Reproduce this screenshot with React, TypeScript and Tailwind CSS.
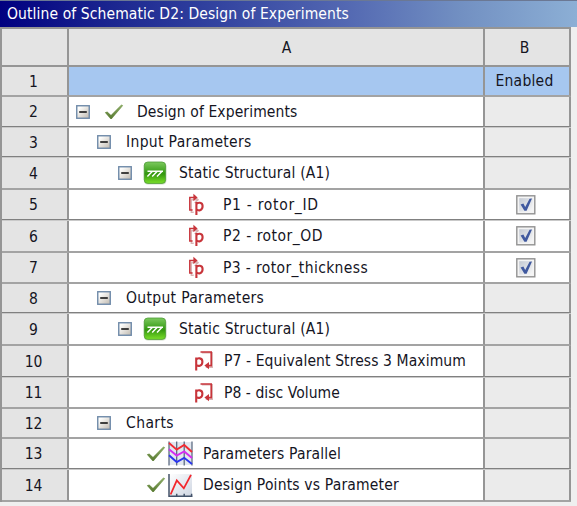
import React from "react";

const Check = () => (
  <svg width="20" height="16" viewBox="0 0 20 16" className="shrink-0">
    <defs>
      <linearGradient id="ck" x1="0" y1="0" x2="0" y2="1">
        <stop offset="0" stopColor="#8fae6b" />
        <stop offset="1" stopColor="#57792f" />
      </linearGradient>
    </defs>
    <path d="M0.8 8.6 L3.2 7.4 L7 11 L17.4 0.6 L19.2 1.6 L7.6 15 H6.6 Z" fill="url(#ck)" />
  </svg>
);

const Toggle = () => (
  <svg width="14" height="14" viewBox="0 0 14 14" className="shrink-0">
    <defs>
      <linearGradient id="tg" x1="0" y1="0" x2="1" y2="1">
        <stop offset="0.2" stopColor="#fdfdfb" />
        <stop offset="1" stopColor="#bfb8ae" />
      </linearGradient>
    </defs>
    <rect x="0.75" y="0.75" width="12.5" height="12.5" fill="url(#tg)" stroke="#6f8aa9" strokeWidth="1.4" />
    <path d="M3.2 7H10.8" stroke="#161616" strokeWidth="1.6" />
  </svg>
);

const Structural = () => (
  <svg width="24" height="24" viewBox="0 0 24 24" className="shrink-0">
    <defs>
      <linearGradient id="gr" x1="0" y1="0" x2="0" y2="1">
        <stop offset="0" stopColor="#7cc95e" />
        <stop offset="0.42" stopColor="#43a422" />
        <stop offset="0.55" stopColor="#33960f" />
        <stop offset="1" stopColor="#7be02a" />
      </linearGradient>
    </defs>
    <rect x="1" y="1.4" width="22.4" height="22.2" rx="4" fill="#b9c9b0" opacity="0.7" />
    <rect x="1.2" y="1" width="21.4" height="21.4" rx="3.6" fill="url(#gr)" stroke="#4d9c35" strokeWidth="0.8" />
    <path d="M4.5 10.2H20M9.2 10.5L4.4 15.4M14 10.5L9.2 15.4M18.8 10.5L14 15.4" stroke="#fff" strokeWidth="1.5" fill="none" />
  </svg>
);

const InputParam = () => (
  <svg width="18" height="24" viewBox="0 0 18 24" className="shrink-0">
    <path d="M5 18.5H2.6V6H8.4M6 2.8L9.4 6L6 9.2" stroke="#d9b4b4" strokeWidth="1.4" fill="none" transform="translate(.7 .7)" />
    <path d="M4.6 17H1.8V4.4H7.8" stroke="#c8353b" strokeWidth="1.5" fill="none" />
    <path d="M5.4 0.8L9.6 4.4L5.4 8Z" fill="#c8353b" />
    <path d="M8.4 9V22M8.4 11.2C9.6 9.1 14.6 8.8 14.6 13.1C14.6 18 10 18.2 8.4 16" stroke="#c8353b" strokeWidth="2.1" fill="none" />
  </svg>
);

const OutputParam = () => (
  <svg width="20" height="22" viewBox="0 0 20 22" className="shrink-0">
    <path d="M7 2H17.5V16.4H11" stroke="#d9b4b4" strokeWidth="1.4" fill="none" transform="translate(.8 .8)" />
    <path d="M6.5 2H17.2V15.6H13.4" stroke="#c8353b" strokeWidth="1.6" fill="none" />
    <path d="M15 12L10.4 15.6L15 19.2Z" fill="#c8353b" />
    <path d="M2.2 7.6V20.6M2.2 9.8C3.4 7.7 8.4 7.4 8.4 11.7C8.4 16.4 3.8 16.6 2.2 14.6" stroke="#c8353b" strokeWidth="2.1" fill="none" />
  </svg>
);

const ParallelChart = () => (
  <svg width="25" height="25" viewBox="0 0 25 25" className="shrink-0">
    <rect x="1" y="1" width="23" height="23" fill="#e2e7ef" />
    <path d="M1 0.5V24.5M8.7 0.5V24.5M16.2 0.5V24.5M24 0.5V24.5" stroke="#53627a" strokeWidth="1.2" />
    <g fill="none" strokeWidth="1.9">
      <path d="M1 2L8.7 8.6L16.2 4L24 11" stroke="#f22b32" />
      <path d="M1 8.2L8.7 14.6L16.2 10.5L24 17" stroke="#d52df0" />
      <path d="M1 14.2L8.7 21L16.2 16.8L24 23" stroke="#2a35ee" />
    </g>
  </svg>
);

const LineChart = () => (
  <svg width="25" height="25" viewBox="0 0 25 25" className="shrink-0">
    <defs>
      <linearGradient id="lc" x1="0" y1="0" x2="1" y2="1">
        <stop offset="0" stopColor="#ffffff" />
        <stop offset="1" stopColor="#cfd6e2" />
      </linearGradient>
    </defs>
    <rect x="1" y="1" width="23" height="22" fill="url(#lc)" />
    <path d="M1 1V23.2H24.5M8.7 20.8V23M16.2 20.8V23M23.6 20.8V23" stroke="#44536a" strokeWidth="1.5" fill="none" />
    <path d="M2.6 21.5L8.8 7.5L15.8 15.3L23 1.8" stroke="#f3262c" strokeWidth="1.8" fill="none" />
  </svg>
);

const CheckBox = () => (
  <svg width="20" height="20" viewBox="0 0 20 20" className="mr-[2px]">
    <defs>
      <linearGradient id="cb" x1="0" y1="0" x2="1" y2="1">
        <stop offset="0" stopColor="#c3c9d3" />
        <stop offset="1" stopColor="#f8f8f8" />
      </linearGradient>
    </defs>
    <rect x="0.8" y="0.8" width="18" height="18" fill="#f4f4f4" stroke="#929292" strokeWidth="1.4" />
    <rect x="3.2" y="3.2" width="13.4" height="13.4" fill="url(#cb)" />
    <path d="M4.6 9.6L7.4 8.4L9.2 12L13.6 3.8L16 3.6L10.6 15.8H8.4Z" fill="#40599f" />
  </svg>
);

type Row = {
  h: string;
  sharp?: boolean;
  pad?: string;
  icons?: React.ReactNode;
  text?: string;
  track?: string;
  checked?: boolean;
};

const rows: Row[] = [
  { h: "h-[30px]" },
  { h: "h-[31px]", sharp: true, pad: "pl-[7px]", icons: <><Toggle /><span className="w-[14px]" /><Check /><span className="w-[13px]" /></>, text: "Design of Experiments", track: "tracking-[0.1px]" },
  { h: "h-[30px]", sharp: true, pad: "pl-[28px]", icons: <><Toggle /><span className="w-[15px]" /></>, text: "Input Parameters", track: "tracking-[0.34px]" },
  { h: "h-[32px]", pad: "pl-[49px]", icons: <><Toggle /><span className="w-[11px]" /><Structural /><span className="w-[12px]" /></>, text: "Static Structural (A1)", track: "tracking-[0.19px]" },
  { h: "h-[31px]", sharp: true, pad: "pl-[119px]", icons: <><InputParam /><span className="w-[17px]" /></>, text: "P1 - rotor_ID", track: "tracking-[0.7px]", checked: true },
  { h: "h-[32px]", pad: "pl-[119px]", icons: <><InputParam /><span className="w-[17px]" /></>, text: "P2 - rotor_OD", track: "tracking-[0.5px]", checked: true },
  { h: "h-[31px]", pad: "pl-[119px]", icons: <><InputParam /><span className="w-[17px]" /></>, text: "P3 - rotor_thickness", track: "tracking-[0.37px]", checked: true },
  { h: "h-[30px]", sharp: true, pad: "pl-[28px]", icons: <><Toggle /><span className="w-[15px]" /></>, text: "Output Parameters", track: "tracking-[0.33px]" },
  { h: "h-[32px]", pad: "pl-[49px]", icons: <><Toggle /><span className="w-[11px]" /><Structural /><span className="w-[12px]" /></>, text: "Static Structural (A1)", track: "tracking-[0.19px]" },
  { h: "h-[32px]", sharp: true, pad: "pl-[125px]", icons: <><OutputParam /><span className="w-[10px]" /></>, text: "P7 - Equivalent Stress 3 Maximum", track: "tracking-[0.1px]" },
  { h: "h-[31px]", pad: "pl-[125px]", icons: <><OutputParam /><span className="w-[10px]" /></>, text: "P8 - disc Volume", track: "tracking-[0.05px]" },
  { h: "h-[30px]", pad: "pl-[28px]", icons: <><Toggle /><span className="w-[15px]" /></>, text: "Charts", track: "tracking-[0.4px]" },
  { h: "h-[31px]", sharp: true, pad: "pl-[77px]", icons: <><Check /><span className="w-[2px]" /><ParallelChart /><span className="w-[10px]" /></>, text: "Parameters Parallel", track: "tracking-[0.17px]" },
  { h: "h-[32px]", pad: "pl-[77px]", icons: <><Check /><span className="w-[2px]" /><LineChart /><span className="w-[10px]" /></>, text: "Design Points vs Parameter", track: "tracking-[0.18px]" },
];

export default function App() {
  return (
    <div className="flex h-[506px] w-[577px] flex-col overflow-hidden bg-[#efefef] text-[15.5px] leading-5 text-[#15151f] [font-family:'DejaVu_Sans_Condensed','DejaVu_Sans',sans-serif]">
      <div className="flex h-[27px] shrink-0 items-center border-t border-[#6b7894] bg-[linear-gradient(90deg,#000080_0%,#1c2790_20%,#3344a0_38%,#5368b2_60%,#7290c2_80%,#8cafd5_100%)] pl-[7px] text-white">
        <span className="whitespace-nowrap tracking-[0.1px]">Outline of Schematic D2: Design of Experiments</span>
      </div>
      <div className="w-[571px] shrink-0 border-l-2 border-t-2 border-[#959595]">
        <div className="flex h-[38px] border-b-2 border-[#959595] bg-[#e4e4e4]">
          <div className="w-[67px] border-r-2 border-[#959595]" />
          <div className="flex w-[416px] items-center justify-center border-r-2 border-[#959595] pl-[21px] pt-px">A</div>
          <div className="flex w-[86px] items-center justify-center border-r-2 border-[#959595] pr-[5px] pt-px">B</div>
        </div>
        {rows.map((r, i) => (
          <div key={i} className={`flex border-b ${r.h} ${r.sharp ? "border-[#c9c9c9]" : "border-[#a3a3a3]"}`}>
            <div className={`flex w-[67px] items-center justify-center border-b border-r-2 border-r-[#959595] bg-[#e4e4e4] pt-px pr-[2px] ${r.sharp ? "border-b-[#808080]" : "border-b-[#a3a3a3]"}`}>{i + 1}</div>
            <div className={`flex w-[416px] items-center border-b border-r-2 border-r-[#959595] ${r.pad ?? ""} ${i === 0 ? "bg-[#a6c7f0]" : "bg-white"} ${r.sharp ? "border-b-[#808080]" : "border-b-[#a3a3a3]"}`}>
              {r.icons}
              <span className={`whitespace-nowrap ${r.track ?? ""}`}>{r.text}</span>
            </div>
            <div className={`flex w-[86px] items-center justify-center border-b border-r-2 border-r-[#959595] ${i === 0 ? "bg-[#a6c7f0] pb-px pr-[5px]" : r.checked ? "bg-white" : "bg-[#ebebeb]"} ${r.sharp ? "border-b-[#808080]" : "border-b-[#a3a3a3]"}`}>
              {i === 0 && <span className="tracking-[0.23px]">Enabled</span>}
              {r.checked && <CheckBox />}
            </div>
          </div>
        ))}
      </div>
    </div>
  );
}
